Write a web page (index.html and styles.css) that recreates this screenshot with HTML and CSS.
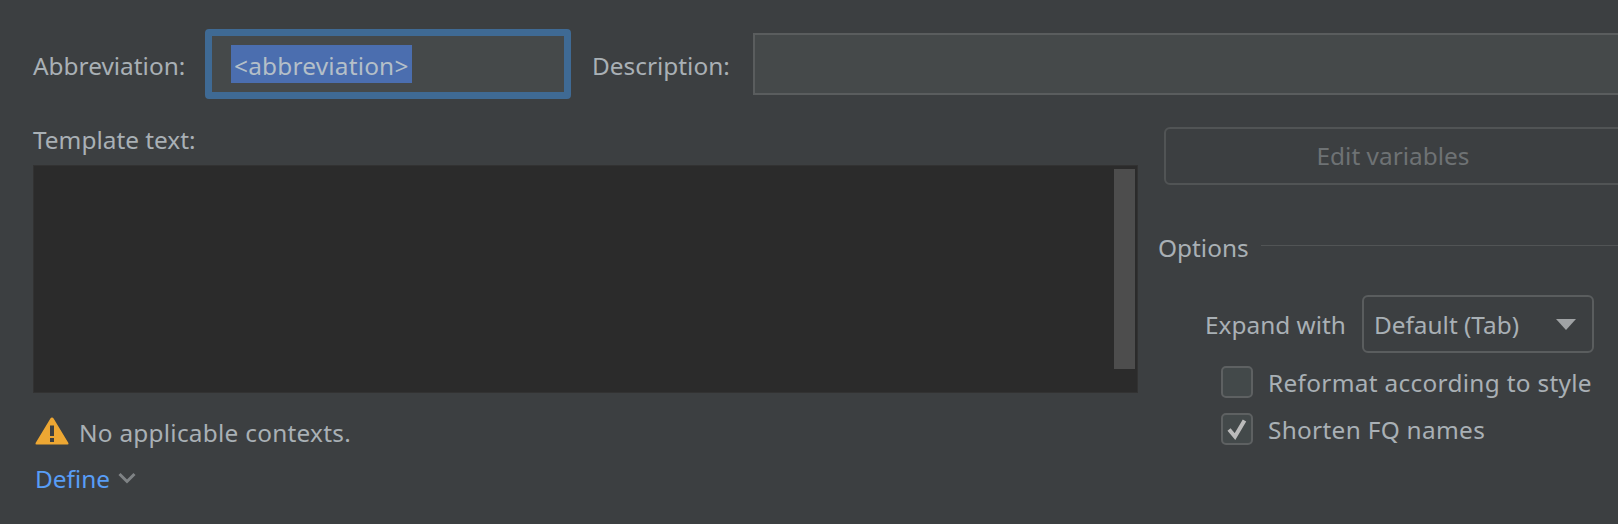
FILE: index.html
```html
<!DOCTYPE html>
<html lang="en">
	<head>
		<meta charset="UTF-8" />
		<title>Live template</title>
		<link rel="stylesheet" href="styles.css">
	</head>
	<body>
		<div class="dialog">
			<div class="top-row">
				<label class="abbr-label">Abbreviation:</label>
				<div class="abbr-input"><span class="selected">&lt;abbreviation&gt;</span></div>
				<label class="desc-label">Description:</label>
				<div class="desc-input"></div>
			</div>

			<div class="main">
				<div class="left">
					<div class="template-label">Template text:</div>
					<div class="editor">
						<div class="scroll-thumb"></div>
					</div>
					<div class="warning">
						<svg class="warn-icon" width="34" height="28" viewBox="0 0 34 28">
							<path d="M17 0.5 Q18 0.5 18.6 1.6 L33.4 26 Q34 27.5 32.4 27.5 L1.6 27.5 Q0 27.5 0.6 26 L15.4 1.6 Q16 0.5 17 0.5 Z" fill="#eda733" />
							<rect x="15" y="8.5" width="4" height="10.5" fill="#3c3f41" />
							<rect x="15" y="21" width="4" height="4" fill="#3c3f41" />
						</svg>
						<span>No applicable contexts.</span>
					</div>
					<div class="define">
						<span class="link">Define</span>
						<svg width="18" height="12" viewBox="0 0 18 12">
							<path d="M1.5 2 L9 9.5 L16.5 2" fill="none" stroke="#7f8385" stroke-width="3" />
						</svg>
					</div>
				</div>

				<div class="right">
					<div class="edit-btn">Edit variables</div>
					<div class="options-head">
						<span>Options</span>
						<div class="options-line"></div>
					</div>
					<div class="expand-row">
						<span>Expand with</span>
						<div class="combo">
							<span>Default (Tab)</span>
							<div class="combo-arrow"></div>
						</div>
					</div>
					<div class="check-row">
						<div class="check"></div>
						<span>Reformat according to style</span>
					</div>
					<div class="check-row">
						<div class="check">
							<svg width="24" height="24" viewBox="0 0 24 24">
								<path d="M4 12.5 L10 19.5 L19.5 3.5" fill="none" stroke="#bbbbbb" stroke-width="4" />
							</svg>
						</div>
						<span>Shorten FQ names</span>
					</div>
				</div>
			</div>
		</div>
	</body>
</html>
```

FILE: styles.css
```css
* {
	box-sizing: border-box;
}
html,
body {
	margin: 0;
	padding: 0;
	overflow: hidden;
}
body {
	width: 1618px;
	height: 524px;
	background-color: #3c3f41;
	color: #a9b0b5;
	font-family: "Noto Sans", sans-serif;
	font-size: 24.4px;
}
.dialog {
	width: 1618px;
	height: 524px;
	padding: 29px 0 0 33px;
	overflow: hidden;
}
.top-row {
	display: flex;
	align-items: center;
	height: 70px;
}
.abbr-label {
	flex: none;
	width: 172px;
	padding-top: 2px;
}
.abbr-input {
	display: flex;
	align-items: center;
	flex: none;
	width: 366px;
	height: 70px;
	padding-left: 19px;
	background-color: #45494a;
	border: 7px solid #3f6a94;
	border-radius: 4px;
}
.selected {
	display: block;
	height: 38px;
	line-height: 41px;
	padding: 0 3px;
	letter-spacing: 0.2px;
	background-color: #4b6eaf;
	color: #b4bfc8;
}
.desc-label {
	flex: none;
	width: 161px;
	margin-left: 21px;
	padding-top: 2px;
}
.desc-input {
	flex: none;
	width: 1000px;
	height: 62px;
	background-color: #45494a;
	border: 2px solid #5a5d5e;
}
.main {
	display: flex;
	margin-top: 22px;
}
.left {
	flex: none;
	width: 1105px;
}
.template-label {
	height: 44px;
	line-height: 38px;
}
.editor {
	display: flex;
	justify-content: flex-end;
	height: 228px;
	padding: 3px 2px 0 0;
	background-color: #2b2b2b;
	border: 1px solid #323232;
}
.scroll-thumb {
	width: 21px;
	height: 200px;
	background-color: #4d4d4d;
}
.warning {
	display: flex;
	align-items: center;
	gap: 10px;
	margin-top: 22px;
	height: 34px;
	letter-spacing: 0.25px;
}
.warn-icon {
	margin-left: 2px;
	margin-top: -2px;
}
.define {
	display: flex;
	align-items: center;
	gap: 8px;
	margin-top: 12px;
	height: 34px;
	padding-left: 2px;
}
.link {
	color: #589df6;
}
.right {
	flex: none;
	width: 460px;
	margin-left: 20px;
}
.edit-btn {
	width: 600px;
	height: 58px;
	margin-left: 6px;
	margin-top: 6px;
	padding-right: 142px;
	line-height: 54px;
	text-align: center;
	color: #6e7274;
	border: 2px solid #515455;
	border-radius: 6px;
}
.options-head {
	display: flex;
	align-items: center;
	gap: 12px;
	margin-top: 45px;
	height: 34px;
	color: #a9b0b5;
}
.options-line {
	flex: 1;
	height: 1px;
	margin-top: -4px;
	margin-right: -200px;
	background-color: #515455;
}
.expand-row {
	display: flex;
	align-items: center;
	gap: 16px;
	margin-top: 31px;
	margin-bottom: -2px;
	margin-left: 47px;
}
.combo {
	display: flex;
	align-items: center;
	justify-content: space-between;
	width: 232px;
	height: 58px;
	padding: 0 16px 0 10px;
	border: 2px solid #5a5d5e;
	border-radius: 6px;
}
.combo-arrow {
	width: 0;
	height: 0;
	border-left: 10px solid transparent;
	border-right: 10px solid transparent;
	border-top: 11px solid #a0a3a5;
}
.check-row {
	display: flex;
	align-items: center;
	gap: 15px;
	height: 32px;
	margin-left: 63px;
	margin-top: 15px;
	letter-spacing: 0.3px;
	white-space: nowrap;
}
.check {
	display: flex;
	align-items: center;
	justify-content: center;
	flex: none;
	width: 32px;
	height: 32px;
	background-color: #43494a;
	border: 2px solid #5e6162;
	border-radius: 5px;
}
```
